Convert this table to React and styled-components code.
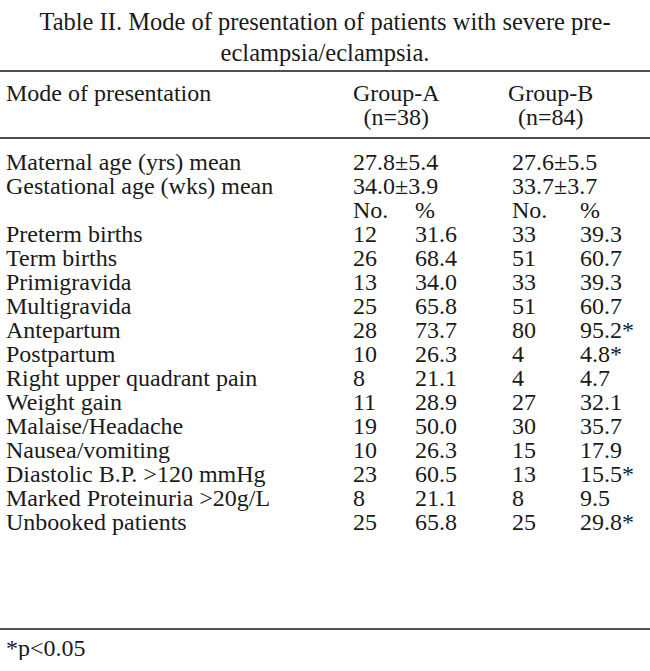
import styled, { createGlobalStyle } from 'styled-components';

const GlobalStyle = createGlobalStyle`
  body {
    margin: 0;
    background: #fff;
  }
`

const rows = [
  ['Preterm births', '12', '31.6', '33', '39.3'],
  ['Term births', '26', '68.4', '51', '60.7'],
  ['Primigravida', '13', '34.0', '33', '39.3'],
  ['Multigravida', '25', '65.8', '51', '60.7'],
  ['Antepartum', '28', '73.7', '80', '95.2*'],
  ['Postpartum', '10', '26.3', '4', '4.8*'],
  ['Right upper quadrant pain', '8', '21.1', '4', '4.7'],
  ['Weight gain', '11', '28.9', '27', '32.1'],
  ['Malaise/Headache', '19', '50.0', '30', '35.7'],
  ['Nausea/vomiting', '10', '26.3', '15', '17.9'],
  ['Diastolic B.P. >120 mmHg', '23', '60.5', '13', '15.5*'],
  ['Marked Proteinuria >20g/L', '8', '21.1', '8', '9.5'],
  ['Unbooked patients', '25', '65.8', '25', '29.8*'],
];

const App = () => {
  return (
    <Page>
      <GlobalStyle />
      <Title>
        Table II. Mode of presentation of patients with severe pre-
        <br />
        eclampsia/eclampsia.
      </Title>
      <Rule />
      <Header>
        <Cell>Mode of presentation</Cell>
        <GroupCell $span={2}>
          <Group>
            <span>Group-A</span>
            <span>(n=38)</span>
          </Group>
        </GroupCell>
        <GroupCell $span={2} $shift={-4}>
          <Group>
            <span>Group-B</span>
            <span>(n=84)</span>
          </Group>
        </GroupCell>
      </Header>
      <Rule />
      <Body>
        <Row>
          <Cell>Maternal age (yrs) mean</Cell>
          <Cell $span={2}>27.8±5.4</Cell>
          <Cell $span={2}>27.6±5.5</Cell>
        </Row>
        <Row>
          <Cell>Gestational age (wks) mean</Cell>
          <Cell $span={2}>34.0±3.9</Cell>
          <Cell $span={2}>33.7±3.7</Cell>
        </Row>
        <Row>
          <Cell />
          <Cell>No.</Cell>
          <Cell>%</Cell>
          <Cell>No.</Cell>
          <Cell>%</Cell>
        </Row>
        {rows.map(r => (
          <Row key={r[0]}>
            {r.map((v, i) => <Cell key={i}>{v}</Cell>)}
          </Row>
        ))}
      </Body>
      <Rule />
      <Footnote>*p&lt;0.05</Footnote>
    </Page>
  )
}
export default App;

const Page = styled.div`
width:650px;
font-family:"Liberation Serif", "Times New Roman", serif;
font-size:24px;
color:#1a1a1a;
`

const Title = styled.div`
padding-top:6px;
margin-bottom:2px;
text-align:center;
line-height:31px;
font-size:24.5px;
`

const Rule = styled.div`
height:2px;
background:#4f4f4f;
`

const grid = `
display:grid;
grid-template-columns:347px 62px 97px 68px 1fr;
padding-left:6px;
`

const Header = styled.div`
${grid}
padding-top:9px;
padding-bottom:8px;
line-height:24px;
`

const Body = styled.div`
padding-top:11px;
padding-bottom:94px;
`

const Row = styled.div`
${grid}
line-height:24px;
`

const Cell = styled.div`
grid-column:span ${p => p.$span || 1};
white-space:nowrap;
`

const GroupCell = styled.div`
grid-column:span ${p => p.$span || 1};
margin-left:${p => p.$shift || 0}px;
`

const Group = styled.div`
display:inline-flex;
flex-direction:column;
align-items:center;
`

const Footnote = styled.div`
padding:6px 0 0 6px;
line-height:24px;
`
